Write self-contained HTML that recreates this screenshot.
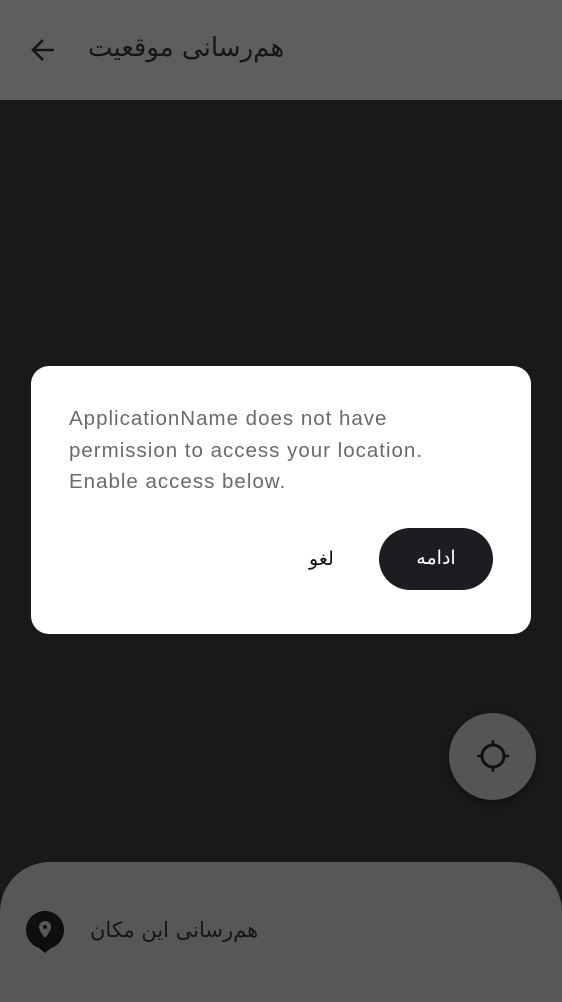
<!DOCTYPE html>
<html><head><meta charset="utf-8"><style>
*{margin:0;padding:0;box-sizing:border-box}
body{width:562px;height:1000px;overflow:hidden;background:#191919;position:relative;font-family:"Liberation Sans","DejaVu Sans",sans-serif}
.top{position:absolute;left:0;top:0;width:562px;height:100px;background:#5e5e5e}
.title{position:absolute;left:88px;top:33px;font-size:26px;color:#151515;font-family:"DejaVu Sans",sans-serif}
.fab{position:absolute;left:449px;top:713px;width:87px;height:87px;border-radius:50%;background:#555;box-shadow:0 3px 8px rgba(0,0,0,.4)}
.sheet{position:absolute;left:0;top:862px;width:562px;height:140px;background:#575757;border-radius:50px 50px 0 0}
.stext{position:absolute;left:90px;top:918px;font-size:21px;color:#151515;font-family:"DejaVu Sans",sans-serif}
.dlg{position:absolute;left:31px;top:366px;width:500px;height:268px;background:#fff;border-radius:18px}
.msg{position:absolute;left:38px;top:37px;font-size:20.5px;line-height:31.5px;color:#646b74;width:400px;letter-spacing:1px}
.btn{position:absolute;left:348px;top:162px;width:114px;height:62px;border-radius:31px;background:#1c1d21;color:#fff;font-size:19px;text-align:center;line-height:60px;font-family:"DejaVu Sans",sans-serif}
.cancel{position:absolute;left:278px;top:182px;font-size:19px;color:#111;font-family:"DejaVu Sans",sans-serif}
</style></head><body>
<div class="top">
<svg style="position:absolute;left:30px;top:37px" width="26" height="26" viewBox="0 0 26 26"><path d="M24 13H3M13 3L3 13L13 23" fill="none" stroke="#151515" stroke-width="2.6"/></svg>
<div class="title" dir="rtl">هم‌رسانی موقعیت</div>
</div>
<div class="fab"><svg style="position:absolute;left:27px;top:26px" width="34" height="34" viewBox="0 0 34 34"><circle cx="17" cy="17" r="11" fill="none" stroke="#111" stroke-width="3"/><path d="M17 1v6M17 27v6M1 17h6M27 17h6" stroke="#111" stroke-width="2.5"/></svg></div>
<div class="sheet"></div>
<svg style="position:absolute;left:24px;top:909px" width="42" height="45" viewBox="0 0 42 45"><path d="M21 44L15 39A19 19 0 1 1 27 39Z" fill="#0e0e0e"/><path d="M21 12a6 6 0 0 0-6 6c0 4 6 11 6 11s6-7 6-11a6 6 0 0 0-6-6z" fill="#575757"/><circle cx="21" cy="18" r="2" fill="#0e0e0e"/></svg>
<div class="stext" dir="rtl">هم‌رسانی این مکان</div>
<div class="dlg">
<div class="msg">ApplicationName does not have permission to access your location. Enable access below.</div>
<div class="cancel">لغو</div>
<div class="btn">ادامه</div>
</div>
</body></html>
